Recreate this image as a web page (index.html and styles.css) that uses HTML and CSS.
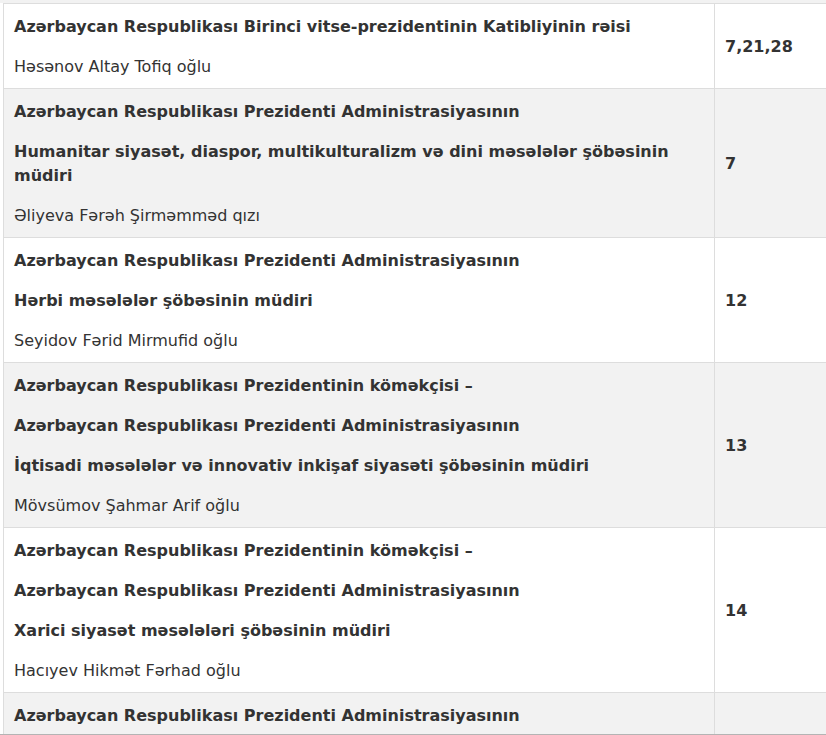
FILE: index.html
```html
<!DOCTYPE html>
<html>
<head>
<meta charset="utf-8">
<link rel="stylesheet" href="styles.css">
</head>
<body>
<div class="wrap">
<table class="tbl">
<tr>
<td class="desc"><p class="b">Azərbaycan Respublikası Birinci vitse-prezidentinin Katibliyinin rəisi</p><p>Həsənov Altay Tofiq oğlu</p></td>
<td class="num">7,21,28</td>
</tr>
<tr class="alt">
<td class="desc"><p class="b">Azərbaycan Respublikası Prezidenti Administrasiyasının</p><p class="b">Humanitar siyasət, diaspor, multikulturalizm və dini məsələlər şöbəsinin müdiri</p><p>Əliyeva Fərəh Şirməmməd qızı</p></td>
<td class="num">7</td>
</tr>
<tr>
<td class="desc"><p class="b">Azərbaycan Respublikası Prezidenti Administrasiyasının</p><p class="b">Hərbi məsələlər şöbəsinin müdiri</p><p>Seyidov Fərid Mirmufid oğlu</p></td>
<td class="num">12</td>
</tr>
<tr class="alt">
<td class="desc"><p class="b">Azərbaycan Respublikası Prezidentinin köməkçisi –</p><p class="b">Azərbaycan Respublikası Prezidenti Administrasiyasının</p><p class="b">İqtisadi məsələlər və innovativ inkişaf siyasəti şöbəsinin müdiri</p><p>Mövsümov Şahmar Arif oğlu</p></td>
<td class="num">13</td>
</tr>
<tr>
<td class="desc"><p class="b">Azərbaycan Respublikası Prezidentinin köməkçisi –</p><p class="b">Azərbaycan Respublikası Prezidenti Administrasiyasının</p><p class="b">Xarici siyasət məsələləri şöbəsinin müdiri</p><p>Hacıyev Hikmət Fərhad oğlu</p></td>
<td class="num">14</td>
</tr>
<tr class="alt">
<td class="desc"><p class="b">Azərbaycan Respublikası Prezidenti Administrasiyasının</p></td>
<td class="num"></td>
</tr>
</table>
</div>
<div class="frame-edge"></div>
</body>
</html>
```
FILE: styles.css
```css
html, body {
  margin: 0;
  padding: 0;
  background: #fff;
  overflow: hidden;
}
.wrap {
  padding: 3px 0 0 3px;
  background: linear-gradient(#f2f2f2 3px, #fff 3px);
  width: 900px;
}
.tbl {
  border-collapse: collapse;
  width: 840px;
  font-family: "DejaVu Sans", Verdana, sans-serif;
  font-size: 16px;
  line-height: 24px;
  color: #333;
}
.tbl td {
  border: 1px solid #ddd;
  padding: 11px 10px 9px;
}
.tbl tr.alt td {
  background: #f2f2f2;
}
.desc {
  width: 690px;
  vertical-align: top;
}
.num {
  font-weight: bold;
  vertical-align: middle;
}
.desc p {
  margin: 0 0 16px;
}
.desc p:last-child {
  margin-bottom: 0;
}
.b {
  font-weight: bold;
}
.frame-edge {
  position: fixed;
  left: 0;
  right: 0;
  bottom: 0;
  height: 1px;
  background: #b4b4b4;
}
```
